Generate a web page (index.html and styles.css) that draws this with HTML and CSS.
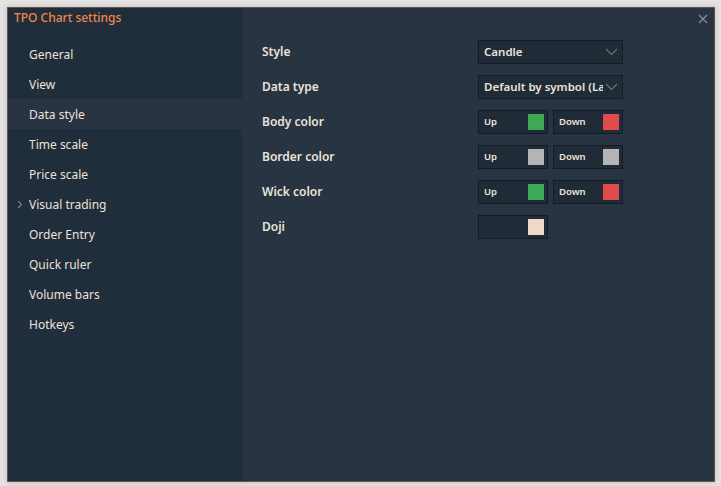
FILE: index.html
```html
<!DOCTYPE html>
<html>
<head>
<meta charset="utf-8">
<link rel="stylesheet" href="styles.css">
</head>
<body>
<div class="dialog">
  <aside class="sidebar">
    <div class="title">TPO Chart settings</div>
    <ul class="nav">
      <li>General</li>
      <li>View</li>
      <li class="active">Data style</li>
      <li>Time scale</li>
      <li>Price scale</li>
      <li class="expand"><svg class="caret" width="6" height="9" viewBox="0 0 6 9"><path d="M1 1 L4.5 4.5 L1 8" fill="none" stroke="#7d838a" stroke-width="1.1"/></svg>Visual trading</li>
      <li>Order Entry</li>
      <li>Quick ruler</li>
      <li>Volume bars</li>
      <li>Hotkeys</li>
    </ul>
  </aside>
  <main class="content">
    <svg class="close" width="10" height="10" viewBox="0 0 10 10"><path d="M1 1 L9 9 M9 1 L1 9" stroke="#8a8f96" stroke-width="1.2"/></svg>
    <div class="row">
      <div class="label">Style</div>
      <div class="select"><span class="val">Candle</span><svg class="chev" width="13" height="8" viewBox="0 0 13 8"><path d="M1 1 L6.5 6.5 L12 1" fill="none" stroke="#6f747a" stroke-width="1.1"/></svg></div>
    </div>
    <div class="row">
      <div class="label">Data type</div>
      <div class="select"><span class="val">Default by symbol (Last)</span><svg class="chev" width="13" height="8" viewBox="0 0 13 8"><path d="M1 1 L6.5 6.5 L12 1" fill="none" stroke="#6f747a" stroke-width="1.1"/></svg></div>
    </div>
    <div class="row">
      <div class="label">Body color</div>
      <div class="pair">
        <div class="color"><span>Up</span><i class="sw green"></i></div>
        <div class="color"><span>Down</span><i class="sw red"></i></div>
      </div>
    </div>
    <div class="row">
      <div class="label">Border color</div>
      <div class="pair">
        <div class="color"><span>Up</span><i class="sw grey"></i></div>
        <div class="color"><span>Down</span><i class="sw grey"></i></div>
      </div>
    </div>
    <div class="row">
      <div class="label">Wick color</div>
      <div class="pair">
        <div class="color"><span>Up</span><i class="sw green"></i></div>
        <div class="color"><span>Down</span><i class="sw red"></i></div>
      </div>
    </div>
    <div class="row">
      <div class="label">Doji</div>
      <div class="pair">
        <div class="color"><span></span><i class="sw peach"></i></div>
      </div>
    </div>
  </main>
</div>
</body>
</html>
```
FILE: styles.css
```css
* { box-sizing: border-box; }
html, body { margin: 0; padding: 0; }
body {
  width: 721px;
  height: 486px;
  background: #e3e3e3;
  font-family: "Noto Sans", "Open Sans", sans-serif;
  padding: 7px 0 0 7px;
  overflow: hidden;
}
.dialog {
  width: 708px;
  height: 475px;
  border: 1px solid #6e5140;
  display: flex;
  box-shadow: 0 0 6px rgba(0,0,0,0.18);
  background: #283442;
}
.sidebar {
  width: 234px;
  background: #202d3a;
  display: flex;
  flex-direction: column;
}
.title {
  height: 31px;
  padding: 1px 0 0 6px;
  color: #f3874a;
  font-size: 12px;
  font-weight: 500;
  line-height: 18px;
}
.nav {
  list-style: none;
  margin: 0;
  padding: 0;
}
.nav li {
  height: 30px;
  line-height: 31px;
  padding-left: 21px;
  font-size: 12px;
  color: #ece3d9;
  position: relative;
}
.nav li.active { background: #283442; }
.caret {
  position: absolute;
  left: 9px;
  top: 11px;
}
.content {
  flex: 1;
  position: relative;
  padding: 26px 0 0 20px;
}
.close {
  position: absolute;
  right: 6px;
  top: 6px;
}
.row {
  display: flex;
  align-items: center;
  height: 35px;
}
.label {
  width: 216px;
  font-size: 12px;
  font-weight: 600;
  color: #ece3d9;
  padding-bottom: 1px;
}
.select {
  width: 145px;
  height: 24px;
  background: #202b38;
  border: 1px solid #141b24;
  display: flex;
  align-items: center;
  padding-left: 5px;
  position: relative;
  overflow: hidden;
}
.val {
  font-size: 11.5px;
  font-weight: 600;
  color: #ece3d9;
  white-space: nowrap;
}
.chev {
  position: absolute;
  right: 0;
  top: 0;
  height: 22px;
  width: 19px;
  padding: 7px 4px 7px 2px;
  background: #202b38;
}
.pair {
  display: flex;
  gap: 5px;
}
.color {
  width: 70px;
  height: 24px;
  background: #202b38;
  border: 1px solid #141b24;
  display: flex;
  align-items: center;
  justify-content: space-between;
  padding: 0 3px 0 5px;
}
.color span {
  font-size: 9.5px;
  font-weight: 600;
  color: #ece3d9;
}
.sw {
  width: 16px;
  height: 16px;
  display: block;
}
.green { background: #3fa856; }
.red { background: #e04b4b; }
.grey { background: #b5b5b5; }
.peach { background: #f0d7c8; }
```
